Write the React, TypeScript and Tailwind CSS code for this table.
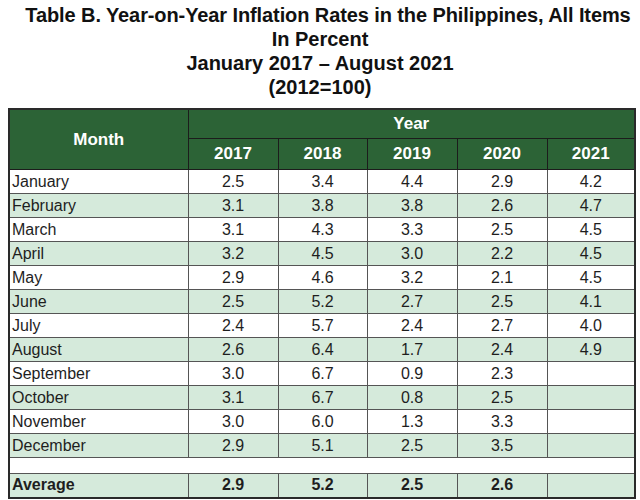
const years = ['2017', '2018', '2019', '2020', '2021']

const rows: [string, string[]][] = [
  ['January', ['2.5', '3.4', '4.4', '2.9', '4.2']],
  ['February', ['3.1', '3.8', '3.8', '2.6', '4.7']],
  ['March', ['3.1', '4.3', '3.3', '2.5', '4.5']],
  ['April', ['3.2', '4.5', '3.0', '2.2', '4.5']],
  ['May', ['2.9', '4.6', '3.2', '2.1', '4.5']],
  ['June', ['2.5', '5.2', '2.7', '2.5', '4.1']],
  ['July', ['2.4', '5.7', '2.4', '2.7', '4.0']],
  ['August', ['2.6', '6.4', '1.7', '2.4', '4.9']],
  ['September', ['3.0', '6.7', '0.9', '2.3', '']],
  ['October', ['3.1', '6.7', '0.8', '2.5', '']],
  ['November', ['3.0', '6.0', '1.3', '3.3', '']],
  ['December', ['2.9', '5.1', '2.5', '3.5', '']],
]

const average = ['2.9', '5.2', '2.5', '2.6', '']

export default function App() {
  return (
    <div className="w-[640px] h-[500px] bg-white font-['Liberation_Sans',Arial,sans-serif] text-[#1e1e1e] overflow-hidden">
      {/* Title */}
      <div className="pt-[3px] h-[108px] text-center font-bold text-[20px] leading-[24px] text-[#111]">
        <p className="whitespace-nowrap pl-[16px] tracking-[-0.1px]">Table B. Year-on-Year Inflation Rates in the Philippines, All Items</p>
        <p>In Percent</p>
        <p>January 2017 – August 2021</p>
        <p>(2012=100)</p>
      </div>

      <div className="pl-[8px]">
        <table className="table-fixed border-collapse w-[626px] border-2 border-[#2a2a2a] text-[16px]">
          <colgroup>
            <col className="w-[179px]" />
            <col className="w-[90px]" />
            <col className="w-[89px]" />
            <col className="w-[90px]" />
            <col className="w-[90px]" />
            <col className="w-[88px]" />
          </colgroup>
          <thead className="bg-[#2c6336] text-white font-bold text-[17px]">
            <tr className="h-[29px]">
              <th rowSpan={2} className="border border-[#1c1c1c] text-center">Month</th>
              <th colSpan={5} className="border border-[#1c1c1c] text-center">Year</th>
            </tr>
            <tr className="h-[31px]">
              {years.map((y) => (
                <th key={y} className="border border-[#1c1c1c] text-center">{y}</th>
              ))}
            </tr>
          </thead>
          <tbody>
            {rows.map(([month, vals], i) => (
              <tr key={month} className={`h-[24px] ${i % 2 === 1 ? 'bg-[#d5eadb]' : 'bg-white'}`}>
                <td className="border border-[#555] pl-[2px] pt-[1px] leading-none">{month}</td>
                {vals.map((v, j) => (
                  <td key={j} className="border border-[#555] text-center pt-[1px] leading-none">{v}</td>
                ))}
              </tr>
            ))}
            <tr className="h-[16px] bg-white">
              <td colSpan={6} className="border border-[#555]"></td>
            </tr>
            <tr className="h-[25px] bg-[#d5eadb] font-bold">
              <td className="border border-[#555] pl-[2px] leading-none">Average</td>
              {average.map((v, j) => (
                <td key={j} className="border border-[#555] text-center leading-none">{v}</td>
              ))}
            </tr>
          </tbody>
        </table>
      </div>
    </div>
  )
}
